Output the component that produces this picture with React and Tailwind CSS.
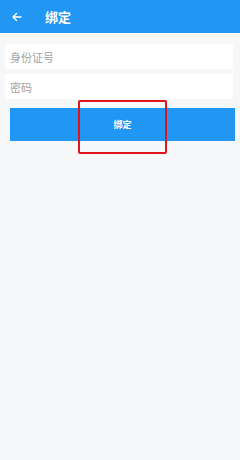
import React from "react";

const fontCjk = { fontFamily: '"Noto Sans CJK SC", "Noto Sans", sans-serif' };

const Campo = ({ placeholder, type = "text" }) => (
  <input
    type={type}
    placeholder={placeholder}
    className="block w-[228px] h-[25px] ml-[5px] bg-white px-[5px] text-[11px] text-gray-700 placeholder:text-[#a3a3a3] outline-none"
    style={fontCjk}
  />
);

export default function App() {
  return (
    <div className="w-[240px] h-[460px] bg-[#f6f7f9]" style={fontCjk}>
      <div className="h-[33px] bg-[#2196f3] flex items-center">
        <svg
          width="12"
          height="12"
          viewBox="0 0 24 24"
          className="ml-[11px]"
          fill="none"
          stroke="white"
          strokeWidth="2.8"
          strokeLinecap="round"
          strokeLinejoin="round"
        >
          <path d="M20 12H5" />
          <path d="M11 5l-7 7 7 7" />
        </svg>
        <span className="ml-[22px] text-[13px] font-bold text-white">绑定</span>
      </div>

      <div className="pt-[11px] flex flex-col gap-[5px]">
        <Campo placeholder="身份证号" />
        <Campo placeholder="密码" type="password" />
      </div>

      <div className="relative mt-[9px] ml-[10px] w-[225px]">
        <button className="w-full h-[33px] bg-[#2196f3] text-white text-[9px] font-bold">
          绑定
        </button>
        <div className="absolute left-[68px] top-[-8px] w-[89px] h-[54px] border-2 border-[#e0151b] rounded-[2px] pointer-events-none" />
      </div>
    </div>
  );
}
